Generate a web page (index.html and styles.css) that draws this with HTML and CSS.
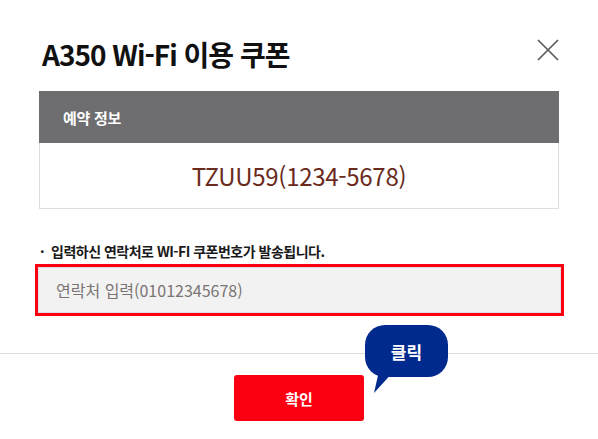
FILE: index.html
```html
<!DOCTYPE html>
<html lang="ko">
<head>
<meta charset="utf-8">
<title>A350 Wi-Fi 이용 쿠폰</title>
<link rel="stylesheet" href="styles.css">
</head>
<body>
<div class="modal">
  <header class="modal-head">
    <h1 class="title">A350 Wi-Fi 이용 쿠폰</h1>
    <button class="close" type="button" aria-label="닫기">
      <svg width="22" height="22" viewBox="0 0 22 22"><path d="M1 1 L21 21 M21 1 L1 21" stroke="#5a5a5a" stroke-width="1.7" fill="none"/></svg>
    </button>
  </header>
  <section class="info">
    <div class="info-head">예약 정보</div>
    <div class="info-body">TZUU59(1234-5678)</div>
  </section>
  <p class="note"><span class="bullet">·</span>입력하신 연락처로 WI-FI 쿠폰번호가 발송됩니다.</p>
  <div class="field">
    <input class="phone" type="text" placeholder="연락처 입력(01012345678)">
  </div>
  <hr class="divider">
  <footer class="foot">
    <button class="confirm" type="button">확인</button>
    <span class="bubble">클릭</span>
  </footer>
</div>
</body>
</html>
```
FILE: styles.css
```css
* { box-sizing: border-box; }
html, body { margin: 0; padding: 0; background: #fff; }
body { font-family: "Noto Sans CJK KR", "Noto Sans", sans-serif; color: #111; }
.modal { width: 598px; height: 439px; position: relative; }
.modal-head { display: flex; justify-content: space-between; align-items: flex-start; padding: 36px 39px 0 42px; height: 91px; }
.title { margin: 0; font-size: 28px; line-height: 36px; font-weight: 700; letter-spacing: -1px; color: #111; }
.close { border: 0; background: none; padding: 0; margin-top: 3px; width: 22px; height: 22px; cursor: pointer; }
.close svg { display: block; }
.info { margin: 0 39px; }
.info-head { background: #6e6e70; color: #fff; height: 52px; display: flex; align-items: center; padding-left: 24px; font-size: 15px; font-weight: 700; letter-spacing: -0.3px; }
.info-body { height: 66px; border: 1px solid #ddd; border-top: 0; display: flex; align-items: center; justify-content: center; font-size: 24px; color: #6a2a1c; letter-spacing: -0.3px; }
.note { margin: 32px 0 0 40px; font-size: 14px; line-height: 20px; font-weight: 700; letter-spacing: -0.5px; color: #1a1a1a; }
.bullet { display: inline-block; width: 11px; }
.field { margin: 3px 34px 0 35px; border: 3px solid #fb0012; height: 52px; }
.phone { display: block; width: 100%; height: 100%; border: 1px solid #e0e0e0; background: #f2f2f2; padding: 0 17px; font-family: inherit; font-size: 16px; color: #333; outline: none; }
.phone::placeholder { color: #7a7472; }
.divider { margin: 37px 0 0; border: 0; border-top: 1px solid #ddd; height: 0; }
.foot { position: relative; display: flex; justify-content: center; padding-top: 21px; }
.confirm { width: 130px; height: 46px; border: 0; border-radius: 3px; background: #fb0010; color: #fff; font-family: inherit; font-size: 15px; font-weight: 700; cursor: pointer; }
.bubble { position: absolute; left: 365px; top: -29px; width: 83px; height: 52px; border-radius: 20px; background: #002a8e; color: #fff; font-size: 17px; font-weight: 700; display: flex; align-items: center; justify-content: center; }
.bubble::after { content: ""; position: absolute; left: 9px; top: 46px; width: 20px; height: 22px; background: #002a8e; clip-path: polygon(5px 0, 20px 0, 0 100%); }
```
